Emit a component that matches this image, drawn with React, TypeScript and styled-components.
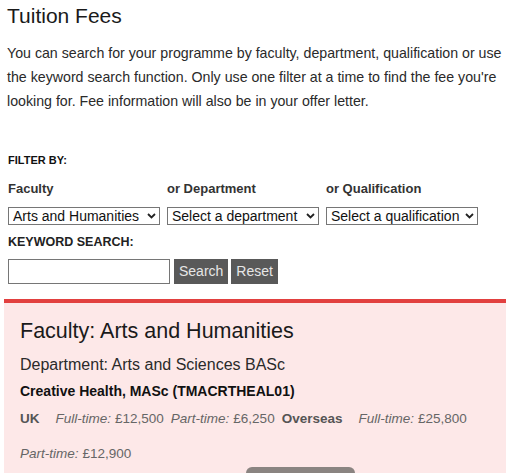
import React from "react";
import styled, { createGlobalStyle } from "styled-components";

const Global = createGlobalStyle`
  html, body { margin: 0; padding: 0; background: #fff; }
  body { font-family: "Liberation Sans", Arial, sans-serif; color: #222; }
  * { box-sizing: border-box; }
`;

const Page = styled.div`
  padding: 0 4px;
  height: 473px;
  overflow: hidden;
`;

const Intro = styled.div`
  padding: 0 0 0 3px;
`;

const Title = styled.h2`
  margin: 0;
  padding-top: 3px;
  font-size: 21px;
  font-weight: normal;
  line-height: 26px;
  color: #1a1a1a;
`;

const Lead = styled.p`
  margin: 12px 0 0;
  font-size: 14.2px;
  line-height: 24px;
  color: #2a2a2a;
`;

const FilterHeading = styled.div`
  margin-top: 41px;
  margin-left: 1px;
  font-size: 11px;
  font-weight: bold;
  line-height: 13px;
  color: #111;
  text-transform: uppercase;
`;

const FilterGrid = styled.div`
  display: grid;
  grid-template-columns: repeat(3, 152px);
  column-gap: 7px;
  margin-top: 14px;
  margin-left: 1px;
`;

const FieldLabel = styled.label`
  font-size: 13px;
  font-weight: bold;
  line-height: 16px;
  color: #333;
`;

const SelectWrap = styled.div`
  position: relative;
  margin-top: 10px;
  height: 18px;
`;

const Select = styled.select`
  appearance: none;
  -webkit-appearance: none;
  width: 100%;
  height: 18px;
  margin: 0;
  padding: 0 14px 0 4px;
  border: 1px solid #767676;
  border-radius: 0;
  background: #fff;
  font-family: "Liberation Sans", Arial, sans-serif;
  font-size: 14px;
  line-height: 16px;
  color: #111;
  white-space: nowrap;
  overflow: hidden;
`;

const Chevron = styled.svg`
  position: absolute;
  right: 4px;
  top: 6px;
  pointer-events: none;
`;

const KeywordHeading = styled.div`
  margin-top: 9px;
  margin-left: 1px;
  font-size: 12.5px;
  font-weight: bold;
  line-height: 16px;
  color: #222;
`;

const SearchRow = styled.div`
  display: flex;
  align-items: stretch;
  gap: 3px;
  margin-top: 9px;
  margin-left: 1px;
  height: 25px;
`;

const KeywordInput = styled.input`
  width: 162px;
  height: 25px;
  margin: 0 1px 0 0;
  border: 1px solid #767676;
  border-radius: 0;
  padding: 0 4px;
  font-family: "Liberation Sans", Arial, sans-serif;
  font-size: 14px;
`;

const ActionButton = styled.button`
  height: 25px;
  padding: 0 5px;
  border: none;
  border-radius: 0;
  background: #595959;
  color: #e6e6e6;
  font-family: "Liberation Sans", Arial, sans-serif;
  font-size: 14px;
  line-height: 25px;
`;

const ResultCard = styled.section`
  margin-top: 15px;
  border-top: 4px solid #e2403f;
  background: #fde8e8;
  padding: 15px 16px 0;
`;

const FacultyTitle = styled.h3`
  margin: 0;
  font-size: 21.5px;
  font-weight: normal;
  line-height: 26px;
  color: #1a1a1a;
`;

const DeptTitle = styled.h4`
  margin: 11px 0 0;
  font-size: 16px;
  font-weight: normal;
  line-height: 20px;
  color: #2a2a2a;
`;

const Programme = styled.div`
  margin-top: 6px;
  font-size: 14px;
  font-weight: bold;
  line-height: 20px;
  color: #111;
`;

const FeeList = styled.div`
  display: flex;
  flex-wrap: wrap;
  align-items: baseline;
  column-gap: 7px;
  row-gap: 19px;
  margin-top: 10px;
  font-size: 13.5px;
  line-height: 16px;
  color: #666;
`;

const Region = styled.span`
  font-weight: bold;
  color: #555;
  margin-right: 9px;
`;

const Fee = styled.span`
  white-space: nowrap;
`;

const FeeKind = styled.em`
  font-style: italic;
  margin-right: 4px;
`;

const MoreRow = styled.div`
  display: flex;
  padding-left: 226px;
  margin-top: 5px;
`;

const MoreButton = styled.button`
  width: 109px;
  height: 34px;
  border: none;
  border-radius: 6px 6px 0 0;
  background: #8a8481;
  color: #fff;
  font-family: "Liberation Sans", Arial, sans-serif;
  font-size: 14px;
  padding-top: 14px;
`;

const chevron = (
  <Chevron width="9" height="6" viewBox="0 0 9 6">
    <path d="M1 1l3.5 3.5L8 1" fill="none" stroke="#222" strokeWidth="1.8" />
  </Chevron>
);

const filters = [
  { label: "Faculty", value: "Arts and Humanities" },
  { label: "or Department", value: "Select a department" },
  { label: "or Qualification", value: "Select a qualification" },
];

export default function App() {
  return (
    <>
      <Global />
      <Page>
        <Intro>
          <Title>Tuition Fees</Title>
          <Lead>
            You can search for your programme by faculty, department, qualification or use
            the keyword search function. Only use one filter at a time to find the fee you're
            looking for. Fee information will also be in your offer letter.
          </Lead>
          <FilterHeading>Filter by:</FilterHeading>
          <FilterGrid>
            {filters.map((f) => (
              <FieldLabel key={f.label}>{f.label}</FieldLabel>
            ))}
            {filters.map((f) => (
              <SelectWrap key={f.value}>
                <Select defaultValue={f.value}>
                  <option>{f.value}</option>
                </Select>
                {chevron}
              </SelectWrap>
            ))}
          </FilterGrid>
          <KeywordHeading>KEYWORD SEARCH:</KeywordHeading>
          <SearchRow>
            <KeywordInput type="text" />
            <ActionButton>Search</ActionButton>
            <ActionButton>Reset</ActionButton>
          </SearchRow>
        </Intro>
        <ResultCard>
          <FacultyTitle>Faculty: Arts and Humanities</FacultyTitle>
          <DeptTitle>Department: Arts and Sciences BASc</DeptTitle>
          <Programme>Creative Health, MASc (TMACRTHEAL01)</Programme>
          <FeeList>
            <Region>UK</Region>
            <Fee><FeeKind>Full-time:</FeeKind>£12,500</Fee>
            <Fee><FeeKind>Part-time:</FeeKind>£6,250</Fee>
            <Region>Overseas</Region>
            <Fee><FeeKind>Full-time:</FeeKind>£25,800</Fee>
            <Fee><FeeKind>Part-time:</FeeKind>£12,900</Fee>
          </FeeList>
          <MoreRow>
            <MoreButton>View more</MoreButton>
          </MoreRow>
        </ResultCard>
      </Page>
    </>
  );
}
